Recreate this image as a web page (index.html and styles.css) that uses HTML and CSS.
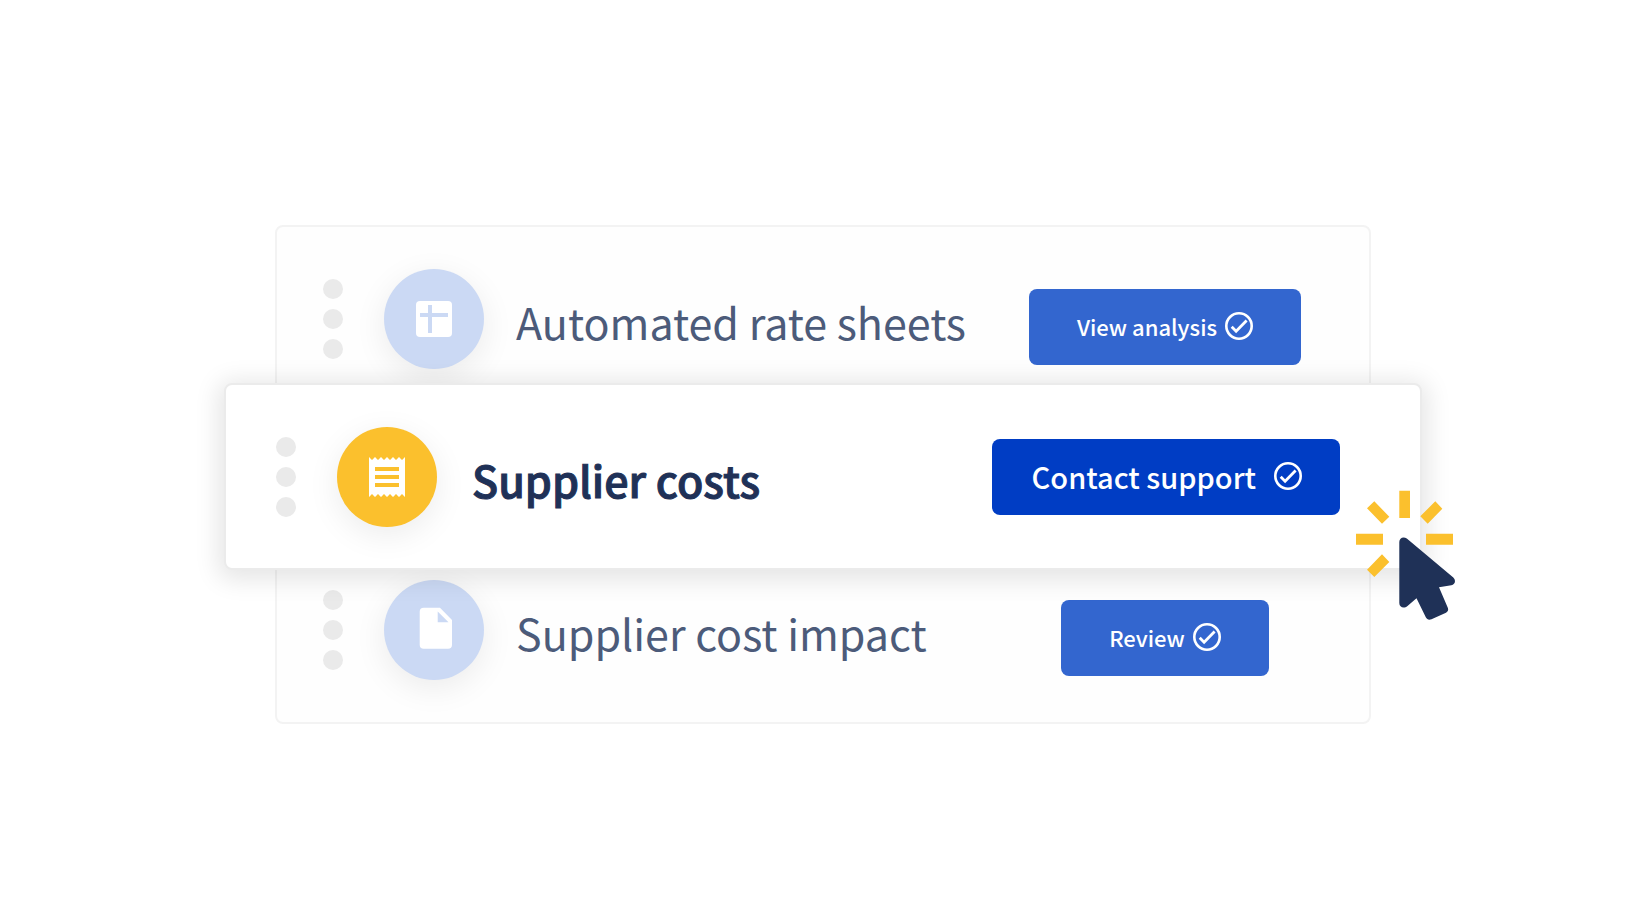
FILE: index.html
```
<!DOCTYPE html>
<html lang="en">
<head>
    <meta charset="UTF-8">
    <meta name="viewport" content="width=device-width, initial-scale=1.0">
    <title>Supplier costs</title>
    <link rel="stylesheet" href="styles.css">
</head>
<body>
    <!-- shared tick icon for the buttons -->
    <svg class="sprite" aria-hidden="true">
        <symbol id="tick" viewBox="0 0 28 28">
            <circle cx="14" cy="14" r="12.7" fill="none" stroke="currentColor" stroke-width="2.6"/>
            <path d="M6.7 14.8l4.4 4.4L21.6 8.5" fill="none" stroke="currentColor" stroke-width="2.8"/>
        </symbol>
    </svg>

    <main class="panel">
        <div class="row row-first">
            <div class="dots"><span></span><span></span><span></span></div>
            <div class="badge">
                <svg viewBox="0 0 48 48" width="48" height="48">
                    <rect x="6" y="6" width="36" height="36" rx="4" fill="#fff"/>
                    <path d="M18 10h4v28h-4zM10 18h28v4H10z" fill="#cbd9f4"/>
                </svg>
            </div>
            <h2 class="label">Automated rate sheets</h2>
            <div class="action">
                <button type="button">View analysis <svg class="tick"><use href="#tick"/></svg></button>
            </div>
        </div>

        <div class="row card">
            <div class="dots"><span></span><span></span><span></span></div>
            <div class="badge badge-active">
                <svg viewBox="0 0 24 24" width="48" height="48">
                    <path fill="#fff" d="M18 17H6v-2h12v2zm0-4H6v-2h12v2zm0-4H6V7h12v2zM3 22l1.5-1.5L6 22l1.5-1.5L9 22l1.5-1.5L12 22l1.5-1.5L15 22l1.5-1.5L18 22l1.5-1.5L21 22V2l-1.5 1.5L18 2l-1.5 1.5L15 2l-1.5 1.5L12 2l-1.5 1.5L9 2 7.5 3.5 6 2 4.5 3.5 3 2v20z"/>
                </svg>
            </div>
            <h2 class="label">Supplier costs</h2>
            <div class="action">
                <button type="button">Contact support <svg class="tick"><use href="#tick"/></svg></button>
            </div>

            <svg class="cursor" viewBox="0 0 100 132" width="100" height="132" aria-hidden="true">
                <path fill="#fbc02d" d="M43.3.7H54V28H43.3zM0 43.7h27v11H0zM70 43.7h27v11H70zM11 18.3l7.3-7 15 15.4-7.3 7zM79.3 11.3l7 7.4-14.6 15-7.4-7.4zM26 64.3l7.3 7.7-15 15-7.3-7.3z"/>
                <path fill="#1f3157" d="M43.3 52c0-4 4-6 7.5-3.5L97.3 87.500c3 3 1.700 7-2 7.700L83 97.300l8.700 20.200c1 2.500.3 4-1.700 5.200l-14.500 6.600c-2.500 1-4.500.4-5.700-2L60.500 108.300l-9 7.700c-3.500 3-8.200 1.500-8.200-3z"/>
            </svg>
        </div>

        <div class="row row-last">
            <div class="dots"><span></span><span></span><span></span></div>
            <div class="badge">
                <svg viewBox="0 0 48 48" width="48" height="48">
                    <path fill="#fff" fill-rule="evenodd" d="M13.700 1.700H30L42 14v24.700a4 4 0 0 1-4 4H13.700a4 4 0 0 1-4-4v-33a4 4 0 0 1 4-4zM27.700 5.500v10.800H38.500z"/>
                </svg>
            </div>
            <h2 class="label">Supplier cost impact</h2>
            <div class="action">
                <button type="button">Review <svg class="tick"><use href="#tick"/></svg></button>
            </div>
        </div>
    </main>
</body>
</html>
```

FILE: styles.css
```
* {
    box-sizing: border-box;
}
body {
    margin: 0;
    min-height: 100vh;
    padding: 29px 269px 0 275px;
    display: flex;
    align-items: center;
    background: #fff;
    font-family: "Noto Sans CJK SC", "Noto Sans", sans-serif;
}
.sprite {
    position: absolute;
    width: 0;
    height: 0;
}
.panel {
    flex: 1;
    border: 2px solid #f3f3f3;
    border-radius: 8px;
    background: #fefefe;
}
.row {
    display: flex;
    align-items: center;
    padding: 0 69px 0 46px;
}
.row-first {
    padding-top: 42px;
    padding-bottom: 14px;
}
.row-last {
    padding-top: 10px;
    padding-bottom: 42px;
}
.dots {
    display: flex;
    flex-direction: column;
    gap: 10px;
    margin-right: 41px;
}
.dots span {
    width: 20px;
    height: 20px;
    border-radius: 50%;
    background: #eaeaea;
}
.badge {
    display: flex;
    align-items: center;
    justify-content: center;
    width: 100px;
    height: 100px;
    margin-right: 32px;
    border-radius: 50%;
    background: #cbd9f4;
    box-shadow: 0 8px 32px rgba(0, 0, 0, 0.08);
}
.label {
    flex: 1;
    margin: 0;
    padding-top: 4px;
    font-size: 43px;
    font-weight: 400;
    line-height: 64px;
    color: #4c5b7a;
    white-space: nowrap;
}
.action {
    display: flex;
    justify-content: center;
    width: 270px;
    padding-top: 16px;
}
button {
    display: flex;
    align-items: center;
    gap: 8px;
    height: 76px;
    padding: 0 48px 2px;
    border: none;
    border-radius: 8px;
    background: #3366cf;
    color: #fff;
    font-family: inherit;
    font-size: 22px;
    font-weight: 500;
    white-space: nowrap;
    cursor: pointer;
}
.tick {
    width: 28px;
    height: 28px;
}

/* highlighted row, lifted over the panel */
.card {
    position: relative;
    z-index: 1;
    margin: 0 -53px;
    padding: 42px 80px 41px 50px;
    border: 2px solid #ebebeb;
    border-radius: 8px;
    background: #fff;
    box-shadow: 0 4px 24px 6px rgba(0, 0, 0, 0.1);
}
.card .badge {
    margin-right: 35px;
}
.card .badge-active {
    background: #fbc02d;
}
.card .label {
    font-weight: 500;
    color: #1f3157;
    -webkit-text-stroke: 1px #1f3157;
}
.card .action {
    width: auto;
    padding-top: 0;
}
.card button {
    gap: 18px;
    padding: 0 38px 2px 40px;
    background: #003dc4;
    font-size: 29px;
}
.cursor {
    position: absolute;
    top: 105px;
    right: -36px;
}
```
